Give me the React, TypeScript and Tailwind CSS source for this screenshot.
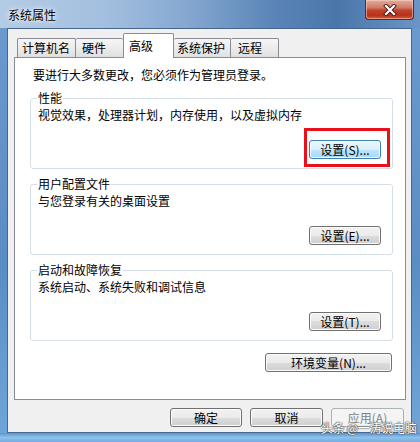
import React from "react";

type Kind = "normal" | "focus" | "disabled";

function Btn({ label, className, kind = "normal" }: { label: string; className: string; kind?: Kind }) {
  const styles: Record<Kind, string> = {
    normal:
      "border-[#707070] bg-[linear-gradient(to_bottom,#f2f2f2_0%,#ebebeb_50%,#dddddd_50%,#cfcfcf_100%)] shadow-[inset_0_0_0_1px_#fbfbfb] text-black",
    focus:
      "border-[#3c7fb1] bg-[linear-gradient(to_bottom,#eaf6fd_0%,#d9f0fc_50%,#bee6fd_50%,#a7d9f5_100%)] shadow-[inset_0_0_0_1px_#f4fbff] text-black",
    disabled: "border-[#adb2b5] bg-[#f4f4f4] text-[#838383]",
  };
  return (
    <div
      className={`h-[19px] rounded-[3px] border flex items-center justify-center text-[12px] leading-[14px] ${styles[kind]} ${className}`}
    >
      {label}
    </div>
  );
}

function Group({ title, desc, btn }: { title: string; desc: string; btn: React.ReactNode }) {
  return (
    <fieldset className="ml-[15px] w-[363px] rounded-[3px] border border-[#d5dfe5] pl-[6px] pr-[11px] pb-[9px]">
      <legend className="px-[1px] text-[12px] leading-[14px]">{title}</legend>
      <div className="ml-[1px] mt-[3px] leading-[14px]">{desc}</div>
      <div className="mt-[18px] flex justify-end">{btn}</div>
    </fieldset>
  );
}

export default function App() {
  const tabBase =
    "h-[19px] border-t border-[#898c95] bg-[linear-gradient(to_bottom,#f6f6f6_0%,#ececec_50%,#e0e0e0_100%)] pt-[2px] leading-[14px] text-[12px] rounded-t-[2px]";
  return (
    <div className="relative w-[420px] h-[442px] overflow-hidden bg-[linear-gradient(to_bottom,#6b9bcf_0%,#5a8dc4_60%,#6fa7da_100%)] font-['Noto_Sans_CJK_SC',sans-serif] text-[12px] text-black">
      {/* title bar */}
      <div className="h-[28px] flex justify-between items-start bg-[linear-gradient(to_right,#b4cbe5_0%,#a3bfdf_25%,#84a7d0_45%,#5b85b8_65%,#4a76aa_80%,#6a95c6_100%)]">
        <div className="pl-[8px] pt-[8px] leading-[14px] text-[12px] text-black [text-shadow:0_0_6px_#ffffff,0_0_3px_#ffffff]">
          系统属性
        </div>
        <div className="mr-[6px] w-[49px] h-[20px] rounded-b-[4px] border border-t-0 border-[#6b2218] bg-[linear-gradient(to_bottom,#e2ad9f_0%,#d17a67_40%,#c0412b_55%,#b8321c_80%,#d55a3e_100%)] shadow-[inset_0_0_0_1px_rgba(255,220,210,0.5)] flex items-center justify-center">
          <svg width="14" height="12" viewBox="0 0 14 12">
            <path d="M3 2 L11 10 M11 2 L3 10" stroke="#4a1a12" strokeWidth="4" strokeLinecap="square" />
            <path d="M3 2 L11 10 M11 2 L3 10" stroke="#ffffff" strokeWidth="2.2" strokeLinecap="square" />
          </svg>
        </div>
      </div>

      {/* content */}
      <div className="ml-[7px] w-[405px] h-[405px] border border-[#46688f] bg-[#f0f0f0]">
        {/* tabs */}
        <div className="mt-[4px] ml-[9px] flex items-end h-[24px]">
          <div className={`${tabBase} w-[59px] border-l border-r pl-[4px]`}>计算机名</div>
          <div className={`${tabBase} w-[47px] pl-[6px]`}>硬件</div>
          <div className="relative z-10 -mb-[1px] h-[25px] w-[51px] border-t border-l border-r border-[#898c95] bg-white pt-[5px] pl-[5px] leading-[14px] text-[12px] rounded-t-[2px]">
            高级
          </div>
          <div className={`${tabBase} w-[57px] border-r pl-[3px]`}>系统保护</div>
          <div className={`${tabBase} w-[48px] border-r pl-[7px]`}>远程</div>
        </div>

        {/* panel */}
        <div className="ml-[6px] w-[392px] h-[343px] border border-[#898c95] bg-white">
          <div className="pl-[18px] pt-[10px] leading-[14px]">要进行大多数更改，您必须作为管理员登录。</div>
          <div className="mt-[9px]">
            <Group
              title="性能"
              desc="视觉效果，处理器计划，内存使用，以及虚拟内存"
              btn={<Btn label="设置(S)..." className="w-[72px]" kind="focus" />}
            />
          </div>
          <div className="mt-[8px]">
            <Group
              title="用户配置文件"
              desc="与您登录有关的桌面设置"
              btn={<Btn label="设置(E)..." className="w-[72px]" />}
            />
          </div>
          <div className="mt-[8px]">
            <Group
              title="启动和故障恢复"
              desc="系统启动、系统失败和调试信息"
              btn={<Btn label="设置(T)..." className="w-[72px]" />}
            />
          </div>
          <div className="mt-[12px] flex justify-end pr-[13px]">
            <Btn label="环境变量(N)..." className="w-[127px]" />
          </div>
        </div>

        {/* bottom buttons */}
        <div className="mt-[8px] flex justify-end gap-[8px] pr-[7px]">
          <Btn label="确定" className="w-[72px]" />
          <Btn label="取消" className="w-[73px]" />
          <Btn label="应用(A)" className="w-[73px]" kind="disabled" />
        </div>
      </div>

      {/* bottom frame */}
      <div className="h-[9px] bg-[linear-gradient(to_bottom,#5e93c9_0%,#8cc2ec_50%,#74acdd_100%)]" />

      {/* red annotation box */}
      <div className="absolute left-[304px] top-[128px] w-[86px] h-[39px] border-[3px] border-[#e8111b]" />

      {/* watermark */}
      <div className="absolute left-[321px] top-[421px] whitespace-nowrap text-[12px] leading-[14px] tracking-[-0.3px] text-white [text-shadow:0_0_1px_#444,0_0_1px_#444,0_0_2px_#666]">
        头条 @一涛说电脑
      </div>
    </div>
  );
}
